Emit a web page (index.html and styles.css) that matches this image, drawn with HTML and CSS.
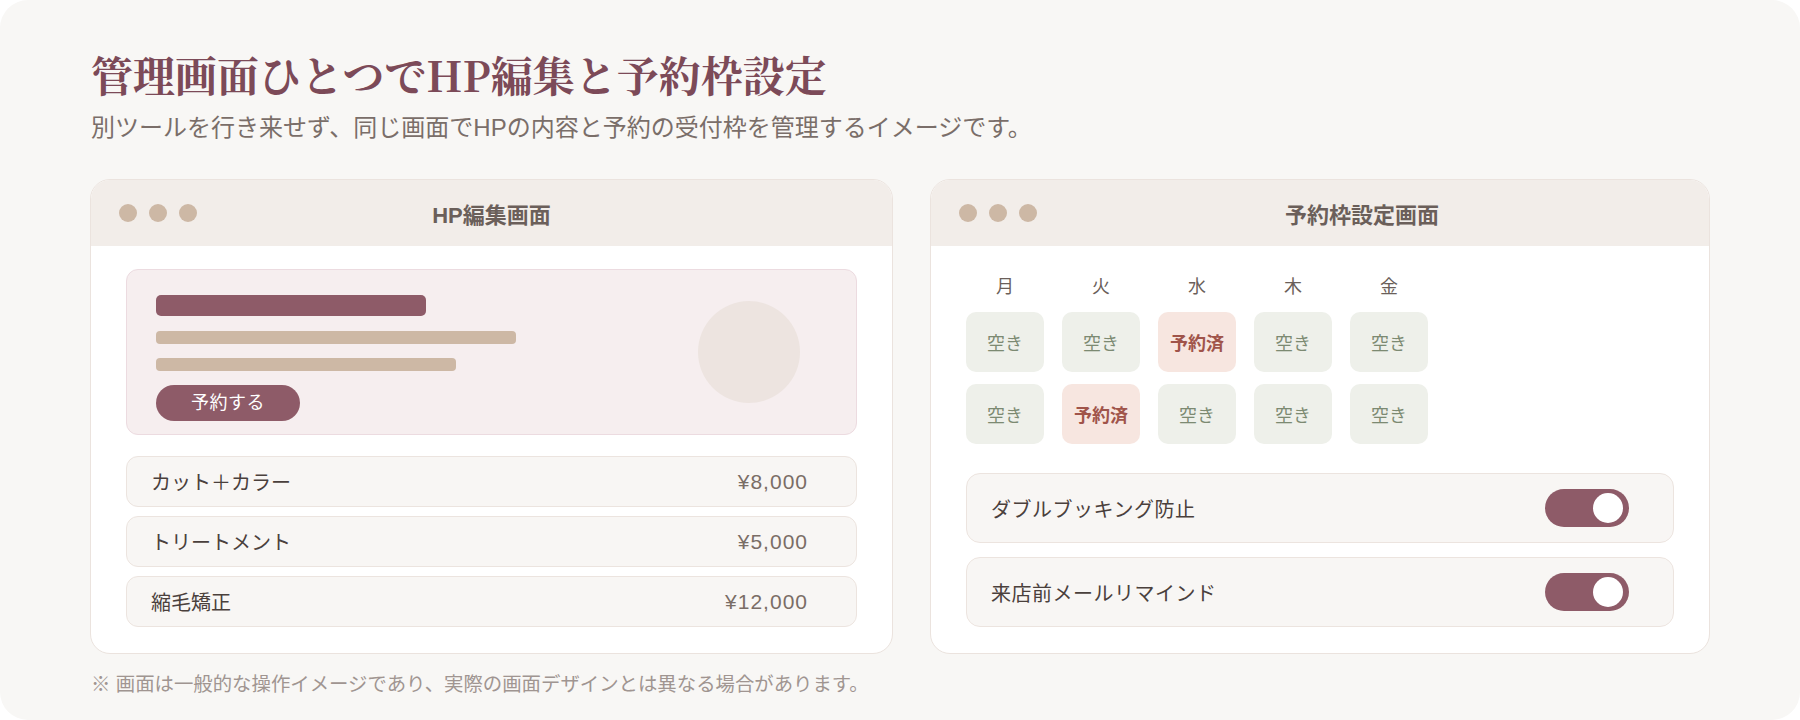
FILE: index.html
```html
<!DOCTYPE html>
<html lang="ja">
<head>
    <meta charset="UTF-8">
    <meta name="viewport" content="width=device-width, initial-scale=1.0">
    <title>管理画面ひとつでHP編集と予約枠設定</title>
    <link rel="stylesheet" href="styles.css">
</head>
<body>
    <div class="page">
        <h1 class="title">管理画面ひとつでHP編集と予約枠設定</h1>
        <p class="lead">別ツールを行き来せず、同じ画面でHPの内容と予約の受付枠を管理するイメージです。</p>

        <div class="screens">
            <!-- HP編集画面 -->
            <div class="window window-hp">
                <div class="window-bar">
                    <div class="dots"><span></span><span></span><span></span></div>
                    <div class="window-title">HP編集画面</div>
                </div>
                <div class="window-body">
                    <div class="hero">
                        <div class="hero-text">
                            <div class="bar bar-title"></div>
                            <div class="bar bar-line"></div>
                            <div class="bar bar-line short"></div>
                            <div class="hero-btn">予約する</div>
                        </div>
                        <div class="hero-photo"></div>
                    </div>
                    <ul class="menu-list">
                        <li><span>カット＋カラー</span><span class="price">¥8,000</span></li>
                        <li><span>トリートメント</span><span class="price">¥5,000</span></li>
                        <li><span>縮毛矯正</span><span class="price">¥12,000</span></li>
                    </ul>
                </div>
            </div>

            <!-- 予約枠設定画面 -->
            <div class="window window-slots">
                <div class="window-bar">
                    <div class="dots"><span></span><span></span><span></span></div>
                    <div class="window-title">予約枠設定画面</div>
                </div>
                <div class="window-body">
                    <div class="slot-grid">
                        <div class="day">月</div>
                        <div class="day">火</div>
                        <div class="day">水</div>
                        <div class="day">木</div>
                        <div class="day">金</div>

                        <div class="slot">空き</div>
                        <div class="slot">空き</div>
                        <div class="slot booked">予約済</div>
                        <div class="slot">空き</div>
                        <div class="slot">空き</div>

                        <div class="slot">空き</div>
                        <div class="slot booked">予約済</div>
                        <div class="slot">空き</div>
                        <div class="slot">空き</div>
                        <div class="slot">空き</div>
                    </div>
                    <div class="setting">
                        <span>ダブルブッキング防止</span>
                        <span class="toggle"></span>
                    </div>
                    <div class="setting">
                        <span>来店前メールリマインド</span>
                        <span class="toggle"></span>
                    </div>
                </div>
            </div>
        </div>

        <p class="note">※ 画面は一般的な操作イメージであり、実際の画面デザインとは異なる場合があります。</p>
    </div>
</body>
</html>
```

FILE: styles.css
```css
body {
    margin: 0;
    padding: 0;
    background-color: #ffffff;
    font-family: "Liberation Sans", "Noto Sans CJK JP", sans-serif;
    color: #4a403c;
}
.page {
    box-sizing: border-box;
    height: 720px;
    padding: 49px 90px 0 91px;
    background-color: #f8f7f5;
    border-radius: 28px;
}
.title {
    margin: 0;
    font-family: "Noto Serif CJK JP", "Liberation Serif", "Noto Sans CJK JP", serif;
    font-size: 42px;
    line-height: 50px;
    font-weight: 700;
    color: #7c4a58;
}
.lead {
    margin: 13px 0 0;
    font-size: 24px;
    line-height: 32px;
    color: #7a6e69;
}
.screens {
    display: grid;
    grid-template-columns: 803px 780px;
    gap: 37px;
    margin: 35px 0 0 -1px;
}
.window {
    background: white;
    border: 1px solid #ebe3de;
    border-radius: 20px;
    overflow: hidden;
}
.window-bar {
    display: flex;
    align-items: center;
    height: 66px;
    padding: 0 28px;
    background-color: #f2ede9;
}
.dots {
    display: flex;
    gap: 12px;
}
.dots span {
    width: 18px;
    height: 18px;
    border-radius: 50%;
    background-color: #cdb8a5;
}
.window-title {
    flex: 1;
    text-align: center;
    font-size: 22px;
    font-weight: 700;
    color: #6b5f5a;
}
.window-hp .window-title {
    margin-right: 78px;
}
.window-slots .window-title {
    margin-left: 6px;
}
.window-body {
    padding: 23px 35px 26px;
}

/* HP編集 */
.hero {
    display: flex;
    align-items: center;
    justify-content: space-between;
    height: 166px;
    box-sizing: border-box;
    padding: 0 56px 0 29px;
    background-color: #f6eeef;
    border: 1px solid #ecdbe0;
    border-radius: 12px;
}
.hero-text {
    display: flex;
    flex-direction: column;
    align-items: flex-start;
    margin-top: 12px;
}
.bar {
    border-radius: 4px;
}
.bar-title {
    width: 270px;
    height: 21px;
    background-color: #8e5b68;
    border-radius: 5px;
}
.bar-line {
    width: 360px;
    height: 13px;
    margin-top: 15px;
    background-color: #cdb8a5;
}
.bar-line.short {
    width: 300px;
    margin-top: 14px;
}
.hero-btn {
    width: 144px;
    height: 36px;
    margin-top: 14px;
    border-radius: 18px;
    background-color: #8e5b68;
    color: white;
    font-size: 18px;
    line-height: 36px;
    text-align: center;
    letter-spacing: 0.03em;
}
.hero-photo {
    width: 102px;
    height: 102px;
    border-radius: 50%;
    background-color: #ede4e0;
}
.menu-list {
    list-style-type: none;
    margin: 21px 0 0;
    padding: 0;
}
.menu-list li {
    display: flex;
    justify-content: space-between;
    align-items: center;
    height: 51px;
    box-sizing: border-box;
    margin-top: 9px;
    padding: 0 48px 0 24px;
    background-color: #f8f6f4;
    border: 1px solid #ece4df;
    border-radius: 12px;
    font-size: 20px;
}
.menu-list li:first-child {
    margin-top: 0;
}
.price {
    color: #7a6d66;
    font-size: 21px;
    letter-spacing: 1px;
}

/* 予約枠設定 */
.slot-grid {
    display: grid;
    grid-template-columns: repeat(5, 78px);
    grid-template-rows: 31px 60px 60px;
    column-gap: 18px;
    row-gap: 12px;
}
.day {
    padding-top: 6px;
    text-align: center;
    font-size: 18px;
    line-height: 25px;
    color: #6b5f5a;
}
.slot {
    display: flex;
    align-items: center;
    justify-content: center;
    border-radius: 10px;
    background-color: #eef0ea;
    color: #7c8a72;
    font-size: 18px;
}
.slot.booked {
    background-color: #f7e6e0;
    color: #a0544a;
    font-weight: 700;
}
.setting {
    display: flex;
    align-items: center;
    justify-content: space-between;
    height: 70px;
    box-sizing: border-box;
    margin-top: 14px;
    padding: 0 44px 0 24px;
    background-color: #f8f6f4;
    border: 1px solid #ece4df;
    border-radius: 14px;
    font-size: 20px;
    letter-spacing: 0.5px;
}
.slot-grid + .setting {
    margin-top: 29px;
}
.toggle {
    position: relative;
    width: 84px;
    height: 38px;
    border-radius: 19px;
    background-color: #8e5b68;
}
.toggle::after {
    content: "";
    position: absolute;
    top: 4px;
    right: 6px;
    width: 30px;
    height: 30px;
    border-radius: 50%;
    background-color: white;
}

.note {
    margin: 18px 0 0;
    font-size: 19.4px;
    line-height: 24px;
    color: #a09591;
}
```
